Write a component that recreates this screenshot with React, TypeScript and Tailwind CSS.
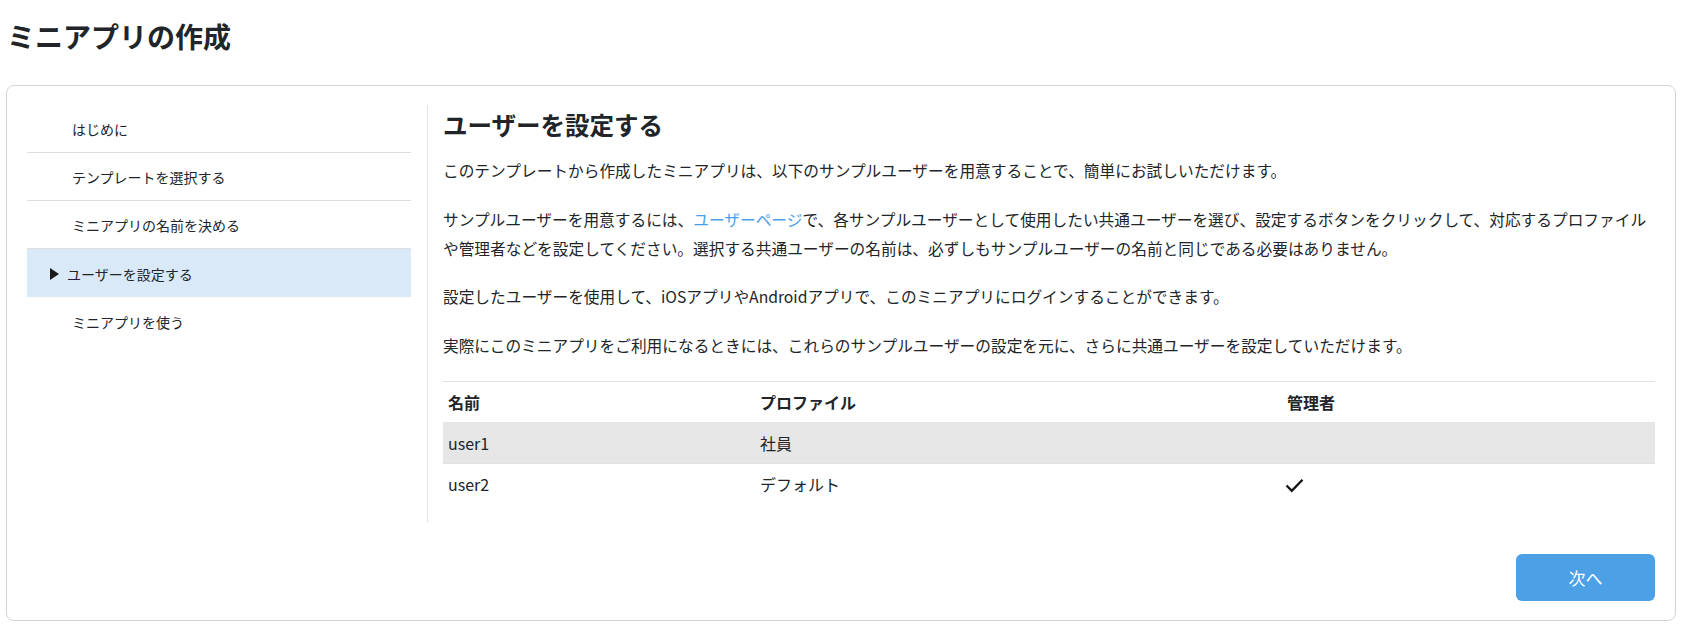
const steps = [
    'はじめに',
    'テンプレートを選択する',
    'ミニアプリの名前を決める',
    'ユーザーを設定する',
    'ミニアプリを使う',
]
const activeStep = 3

const users = [
    { name: 'user1', profile: '社員', admin: false },
    { name: 'user2', profile: 'デフォルト', admin: true },
]

function Triangle() {
    return (
        <svg width="9" height="12" viewBox="0 0 9 12" className="shrink-0">
            <polygon points="0,0 9,6 0,12" fill="#1a1a1a" />
        </svg>
    )
}

function CheckMark() {
    return (
        <svg width="19" height="15" viewBox="0 0 19 15" className="-ml-[2px] mt-[3px] block">
            <polyline points="1.5,7.5 6.8,12.8 17.5,1.8" fill="none" stroke="#111" strokeWidth="2.3" />
        </svg>
    )
}

export default function App() {
    return (
        <div
            className="min-h-screen bg-white px-[6px] text-[#212529]"
            style={{ fontFamily: '"Noto Sans CJK JP", "Noto Sans", sans-serif' }}
        >
            {/* Page title */}
            <h1 className="pt-[15px] pl-[1px] text-[28px] font-bold leading-[42px]">ミニアプリの作成</h1>

            {/* Card */}
            <div className="mt-[28px] rounded-[8px] border border-[#d5d5d5] px-[20px] pt-[19px] pb-[19px]">
                <div className="flex">
                    {/* Steps */}
                    <div className="w-[384px] shrink-0 text-[14px]">
                        {steps.map((step, i) => {
                            const active = i === activeStep
                            const last = i === steps.length - 1
                            return (
                                <div
                                    key={step}
                                    className={`flex h-[48px] items-center pt-[2px] ${active ? 'bg-[#d9e9f8] pl-[23px] gap-[8px]' : 'pl-[45px]'} ${!active && !last && i !== activeStep - 1 ? 'border-b border-[#dedede]' : ''} ${i === activeStep - 1 ? 'h-[47px] border-b border-[#dedede]' : ''}`}
                                >
                                    {active && <Triangle />}
                                    <span>{step}</span>
                                </div>
                            )
                        })}
                    </div>

                    {/* Main */}
                    <div className="ml-[16px] flex-1 border-l border-[#e4e4e4] pl-[15px] pb-[19px]">
                        <h2 className="text-[24.5px] font-bold leading-[39px]">ユーザーを設定する</h2>
                        <div className="pr-[4px] text-[15.7px] leading-[28.8px]">
                            <p className="mt-[13px]">
                                このテンプレートから作成したミニアプリは、以下のサンプルユーザーを用意することで、簡単にお試しいただけます。
                            </p>
                            <p className="mt-[20px]">
                                サンプルユーザーを用意するには、<a className="text-[#4a9ee8]">ユーザーページ</a>で、各サンプルユーザーとして使用したい共通ユーザーを選び、設定するボタンをクリックして、対応するプロファイルや管理者などを設定してください。選択する共通ユーザーの名前は、必ずしもサンプルユーザーの名前と同じである必要はありません。
                            </p>
                            <p className="mt-[20px]">
                                設定したユーザーを使用して、iOSアプリやAndroidアプリで、このミニアプリにログインすることができます。
                            </p>
                            <p className="mt-[20px]">
                                実際にこのミニアプリをご利用になるときには、これらのサンプルユーザーの設定を元に、さらに共通ユーザーを設定していただけます。
                            </p>
                        </div>

                        {/* Users table */}
                        <table className="mt-[20px] w-full border-collapse text-left text-[16px]">
                            <thead>
                                <tr className="h-[41px] border-t border-[#dee2e6]">
                                    <th className="w-[312px] px-[5px] font-bold">名前</th>
                                    <th className="w-[527px] px-[5px] font-bold">プロファイル</th>
                                    <th className="px-[5px] font-bold">管理者</th>
                                </tr>
                            </thead>
                            <tbody>
                                {users.map((u, i) => (
                                    <tr
                                        key={u.name}
                                        className={`h-[41px] ${i % 2 === 0 ? 'bg-[#e6e6e6]' : 'border-t border-[#dee2e6]'}`}
                                    >
                                        <td className="px-[5px]">{u.name}</td>
                                        <td className="px-[5px]">{u.profile}</td>
                                        <td className="px-[5px]">{u.admin && <CheckMark />}</td>
                                    </tr>
                                ))}
                            </tbody>
                        </table>
                    </div>
                </div>

                {/* Footer */}
                <div className="mt-[31px] flex justify-end">
                    <button className="h-[47px] w-[139px] rounded-[6px] bg-[#4ca0e6] text-[17px] text-white">
                        次へ
                    </button>
                </div>
            </div>
        </div>
    )
}
